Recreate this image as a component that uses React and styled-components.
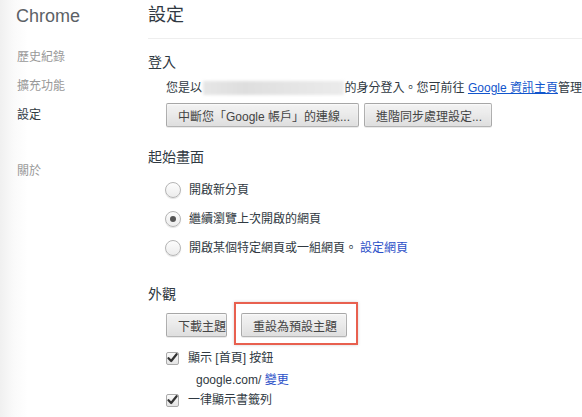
import React from 'react';
import styled, { createGlobalStyle } from 'styled-components';

const GlobalStyle = createGlobalStyle`
    html, body {
        margin: 0;
        padding: 0;
        background: #fff;
    }
    body {
        font-family: "Liberation Sans", "Noto Sans CJK TC", sans-serif;
        color: #303942;
        width: 582px;
        height: 417px;
        overflow: hidden;
    }
`;

const Page = styled.div`
    display: flex;
    width: 582px;
    height: 417px;
    overflow: hidden;
`;

const Sidebar = styled.nav`
    width: 148px;
    flex-shrink: 0;
    background: linear-gradient(to right, #f0f0f0 0px, #fafafa 14px, #fff 28px);
    display: flex;
    flex-direction: column;
    padding-top: 5px;
    box-sizing: border-box;
`;

const Brand = styled.h1`
    margin: 0 0 22px 16px;
    font-size: 18px;
    line-height: 22px;
    font-weight: normal;
    color: #5c6166;
`;

const SideItem = styled.div`
    margin: 0 0 ${p => p.$gap || 13}px 17px;
    font-size: 12px;
    line-height: 16px;
    color: ${p => (p.$active ? '#303942' : '#999')};
`;

const Main = styled.main`
    flex: 1;
    min-width: 0;
    overflow: hidden;
`;

const Header = styled.header`
    height: 39px;
    box-sizing: border-box;
    padding-top: 6px;
    border-bottom: 1px solid #eee;
    font-size: 18px;
    line-height: 18px;
    color: #303942;
`;

const Section = styled.section`
    margin-top: ${p => p.$top}px;
`;

const Heading = styled.h3`
    margin: 0;
    font-size: 14px;
    line-height: 18px;
    font-weight: normal;
    color: #303942;
`;

const Body = styled.div`
    padding-left: 18px;
    display: flex;
    flex-direction: column;
`;

const Line = styled.div`
    font-size: 12px;
    line-height: 16px;
    white-space: nowrap;
    margin-top: ${p => p.$top || 0}px;
    display: flex;
    align-items: center;
`;

const Blurred = styled.span`
    display: inline-block;
    width: 143px;
    height: 14px;
    margin: 0 1px;
    background: linear-gradient(to right, #e6e6e6, #dedede 30%, #e4e4e4 60%, #ebebeb);
    filter: blur(1.5px);
`;

const Link = styled.a`
    color: ${p => (p.$underline ? '#1155cc' : '#2b50c8')};
    text-decoration: ${p => (p.$underline ? 'underline' : 'none')};
    margin-left: ${p => p.$left || 0}px;
`;

const ButtonRow = styled.div`
    display: flex;
    gap: ${p => p.$gap}px;
    margin-top: ${p => p.$top}px;
`;

const Button = styled.button`
    width: ${p => p.$w}px;
    height: 24px;
    padding: 0 11px;
    box-sizing: border-box;
    font-family: "Liberation Sans", "Noto Sans CJK TC", sans-serif;
    font-size: 12px;
    color: #444;
    text-align: left;
    white-space: nowrap;
    overflow: hidden;
    background: linear-gradient(#f2f2f2, #ececec 40%, #dedede);
    border: 1px solid rgba(0, 0, 0, 0.25);
    border-radius: 2px;
    box-shadow: 0 1px 0 rgba(0, 0, 0, 0.08), inset 0 1px 2px rgba(255, 255, 255, 0.75);
`;

const Highlight = styled.div`
    position: relative;
    &::after {
        content: '';
        position: absolute;
        left: -7px;
        right: -11px;
        top: -11px;
        bottom: -8px;
        border: 2px solid #e8604f;
        box-shadow: 0 0 3px rgba(0, 0, 0, 0.18);
        pointer-events: none;
    }
`;

const RadioRow = styled.label`
    display: flex;
    align-items: center;
    gap: 8px;
    font-size: 12px;
    line-height: 16px;
    margin-top: ${p => p.$top}px;
    margin-left: -1px;
    white-space: nowrap;
`;

const Radio = styled.span`
    width: 14px;
    height: 14px;
    border-radius: 50%;
    border: 1px solid #b5b5b5;
    background: linear-gradient(#fdfdfd, #ececec);
    box-shadow: 0 1px 1px rgba(0, 0, 0, 0.12);
    display: flex;
    align-items: center;
    justify-content: center;
    flex-shrink: 0;
    &::after {
        content: '';
        width: 6px;
        height: 6px;
        border-radius: 50%;
        background: #555;
        display: ${p => (p.$checked ? 'block' : 'none')};
    }
`;

const CheckRow = styled.label`
    display: flex;
    align-items: center;
    gap: 9px;
    font-size: 12px;
    line-height: 16px;
    margin-top: ${p => p.$top}px;
`;

const Check = styled.span`
    width: 11px;
    height: 11px;
    border: 1px solid #aaa;
    border-radius: 2px;
    background: linear-gradient(#fafafa, #e4e4e4);
    display: flex;
    align-items: center;
    justify-content: center;
    flex-shrink: 0;
    svg {
        display: block;
    }
`;

const SubLine = styled.div`
    font-size: 12px;
    line-height: 16px;
    padding-left: 30px;
    margin-top: ${p => p.$top}px;
    white-space: nowrap;
`;

const CheckMark = () => (
    <svg width="11" height="10" viewBox="0 0 11 10">
        <path d="M1.5 5.2 L4.2 8 L9.6 1.2" fill="none" stroke="#333" strokeWidth="2.2" strokeLinecap="round" strokeLinejoin="round" />
    </svg>
);

const App = () => {
    return (
        <Page>
            <GlobalStyle />
            <Sidebar>
                <Brand>Chrome</Brand>
                <SideItem>歷史紀錄</SideItem>
                <SideItem>擴充功能</SideItem>
                <SideItem $active $gap={40}>設定</SideItem>
                <SideItem>關於</SideItem>
            </Sidebar>
            <Main>
                <Header>設定</Header>

                <Section $top={14}>
                    <Heading>登入</Heading>
                    <Body>
                        <Line $top={9}>
                            您是以<Blurred />的身分登入。您可前往&nbsp;<Link $underline href="#">Google 資訊主頁</Link>管理
                        </Line>
                        <ButtonRow $gap={5} $top={7}>
                            <Button $w={193}>中斷您「Google 帳戶」的連線...</Button>
                            <Button $w={128}>進階同步處理設定...</Button>
                        </ButtonRow>
                    </Body>
                </Section>

                <Section $top={21}>
                    <Heading>起始畫面</Heading>
                    <Body>
                        <RadioRow $top={16}><Radio /><span>開啟新分頁</span></RadioRow>
                        <RadioRow $top={13}><Radio $checked /><span>繼續瀏覽上次開啟的網頁</span></RadioRow>
                        <RadioRow $top={13}>
                            <Radio />
                            <span>開啟某個特定網頁或一組網頁。<Link $left={3} href="#">設定網頁</Link></span>
                        </RadioRow>
                    </Body>
                </Section>

                <Section $top={29}>
                    <Heading>外觀</Heading>
                    <Body>
                        <ButtonRow $gap={14} $top={10}>
                            <Button $w={61}>下載主題</Button>
                            <Highlight>
                                <Button $w={106}>重設為預設主題</Button>
                            </Highlight>
                        </ButtonRow>
                        <CheckRow $top={13}><Check><CheckMark /></Check>顯示 [首頁] 按鈕</CheckRow>
                        <SubLine $top={6}>google.com/ <Link href="#">變更</Link></SubLine>
                        <CheckRow $top={4}><Check><CheckMark /></Check>一律顯示書籤列</CheckRow>
                    </Body>
                </Section>
            </Main>
        </Page>
    );
};

export default App;
